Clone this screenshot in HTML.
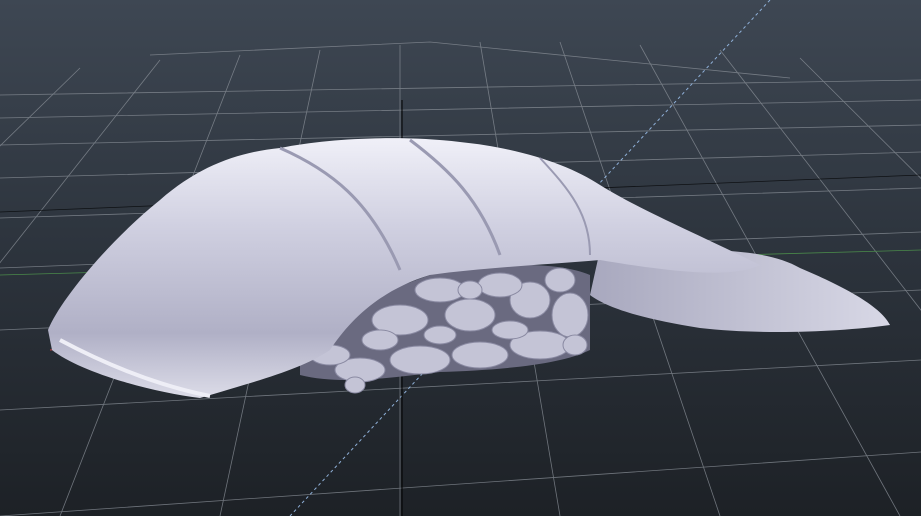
<!DOCTYPE html>
<html><head><style>html,body{margin:0;padding:0;width:921px;height:516px;overflow:hidden;background:#2a3038}</style></head>
<body>
<svg width="921" height="516" viewBox="0 0 921 516" xmlns="http://www.w3.org/2000/svg">
<defs>
<linearGradient id="bg" x1="0" y1="0" x2="0" y2="1">
<stop offset="0" stop-color="#3e4753"/><stop offset="0.5" stop-color="#2c333c"/><stop offset="1" stop-color="#1d2126"/></linearGradient>
<linearGradient id="fish" x1="0" y1="0" x2="0" y2="1">
<stop offset="0" stop-color="#f0f0f8"/><stop offset="0.35" stop-color="#cfcfe0"/><stop offset="0.75" stop-color="#b0b0c6"/><stop offset="1" stop-color="#dcdce8"/></linearGradient>
<linearGradient id="tail" x1="0" y1="0" x2="1" y2="0">
<stop offset="0" stop-color="#a8a8be"/><stop offset="1" stop-color="#d8d8e6"/></linearGradient>
</defs>
<rect width="921" height="516" fill="url(#bg)"/>
<g stroke="#8a9098" stroke-width="0.8" fill="none" opacity="0.75">
<path d="M0,95 L921,80 M0,118 L921,100 M0,145 L921,125 M0,178 L921,152 M0,218 L921,188 M0,268 L921,232 M0,330 L921,290 M0,410 L921,360 M0,516 L921,452"/>
<path d="M160,60 L-200,516 M240,55 L60,516 M320,50 L220,516 M400,45 L400,516 M480,42 L560,516 M560,42 L720,516 M640,45 L900,516 M720,50 L1080,516 M80,68 L-380,516 M800,58 L1260,516"/>
<path d="M150,55 L430,42 L790,78"/>
</g>
<line x1="770" y1="0" x2="290" y2="516" stroke="#8fb0d8" stroke-width="1" stroke-dasharray="3,3"/>
<line x1="402" y1="100" x2="402" y2="516" stroke="#000" stroke-width="1"/>
<line x1="0" y1="212" x2="921" y2="175" stroke="#000" stroke-width="0.8" opacity="0.7"/>
<path d="M0,275 L921,250" stroke="#4a8a4a" stroke-width="0.8"/>
<path d="M50,350 L130,343" stroke="#c04040" stroke-width="1"/>
<!-- tail -->
<path d="M600,250 C690,250 760,245 800,268 C840,285 880,305 890,325 C840,332 760,335 700,328 C650,320 610,310 590,295 Z" fill="url(#tail)"/>
<!-- rice shadow -->
<path d="M300,360 C330,320 380,290 440,272 C500,262 560,262 590,275 L590,350 C560,365 500,370 440,372 C390,378 340,385 300,375 Z" fill="#6a6a80"/>
<g fill="#c4c4d6" stroke="#8a8aa2" stroke-width="1">
<ellipse cx="360" cy="370" rx="25" ry="12"/><ellipse cx="420" cy="360" rx="30" ry="14"/>
<ellipse cx="480" cy="355" rx="28" ry="13"/><ellipse cx="540" cy="345" rx="30" ry="14"/>
<ellipse cx="570" cy="315" rx="18" ry="22"/><ellipse cx="530" cy="300" rx="20" ry="18"/>
<ellipse cx="470" cy="315" rx="25" ry="16"/><ellipse cx="400" cy="320" rx="28" ry="15"/>
<ellipse cx="440" cy="290" rx="25" ry="12"/><ellipse cx="500" cy="285" rx="22" ry="12"/>
<ellipse cx="355" cy="385" rx="10" ry="8"/><ellipse cx="330" cy="355" rx="20" ry="10"/>
<ellipse cx="560" cy="280" rx="15" ry="12"/><ellipse cx="380" cy="340" rx="18" ry="10"/>
<ellipse cx="510" cy="330" rx="18" ry="9"/><ellipse cx="440" cy="335" rx="16" ry="9"/>
<ellipse cx="575" cy="345" rx="12" ry="10"/><ellipse cx="470" cy="290" rx="12" ry="9"/>
</g>
<!-- fish body -->
<path d="M48,330 C60,300 110,240 160,200 C200,165 240,152 280,148 C330,138 400,135 460,142 C520,148 570,165 600,185 C640,210 700,235 760,265 C730,280 660,270 600,260 C540,265 480,268 430,275 C380,290 350,320 330,350 C300,370 260,380 200,398 C150,392 80,372 52,350 Z" fill="url(#fish)"/>
<path d="M280,148 C330,170 370,200 400,270" stroke="#9a9ab2" stroke-width="3" fill="none"/>
<path d="M410,140 C450,170 480,200 500,255" stroke="#9a9ab2" stroke-width="3" fill="none"/>
<path d="M540,158 C570,190 590,215 590,255" stroke="#9a9ab2" stroke-width="2" fill="none"/>
<path d="M60,340 C120,372 170,388 210,396" stroke="#eeeef6" stroke-width="4" fill="none"/>
</svg>
</body></html>
